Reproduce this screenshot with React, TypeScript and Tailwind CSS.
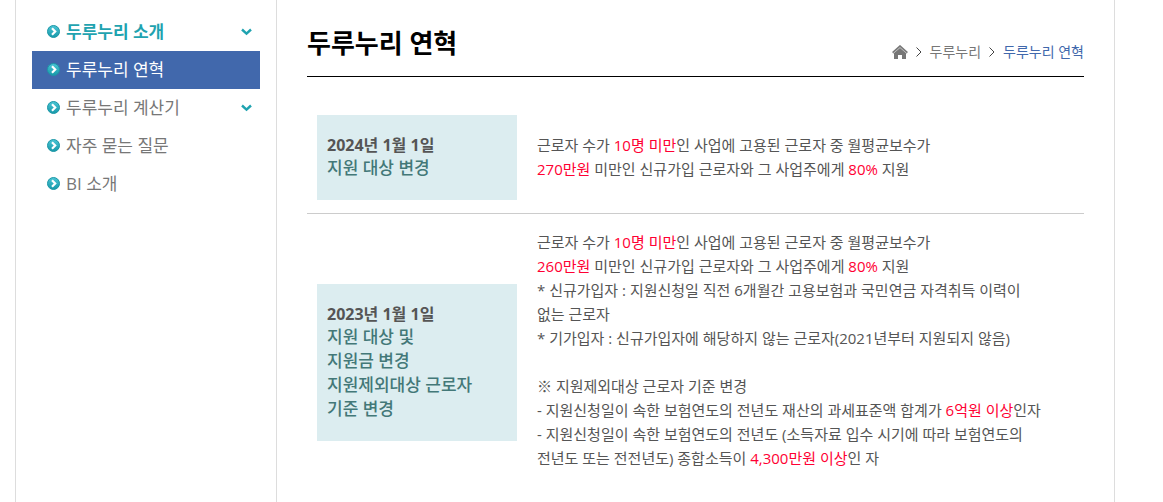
import type { ReactNode } from "react";

const menuItems = [
  { label: "두루누리 소개", state: "open", hasChildren: true },
  { label: "두루누리 연혁", state: "current", hasChildren: false },
  { label: "두루누리 계산기", state: "idle", hasChildren: true },
  { label: "자주 묻는 질문", state: "idle", hasChildren: false },
  { label: "BI 소개", state: "idle", hasChildren: false },
];

const menuStyles: Record<string, string> = {
  open: "font-bold text-[#1fa3b0]",
  current: "bg-[#4168ac] text-white",
  idle: "text-[#777777]",
};

const BulletIcon = () => (
  <svg width="14" height="14" viewBox="0 0 14 14" aria-hidden="true">
    <defs>
      <linearGradient id="bullet" x1="0" y1="0" x2="0" y2="1">
        <stop offset="0" stopColor="#4cc6d6" />
        <stop offset="1" stopColor="#1698a9" />
      </linearGradient>
    </defs>
    <circle cx="6.5" cy="6.5" r="6" fill="url(#bullet)" stroke="#1c97a6" />
    <path d="M5 3.3L8.2 6.5 5 9.7" fill="none" stroke="#fff" strokeWidth="2.2" />
  </svg>
);

const ChevronDown = () => (
  <svg width="11" height="8" viewBox="0 0 11 8" aria-hidden="true">
    <path d="M1 1.5l4.5 4.2L10 1.5" fill="none" stroke="#1fa3b0" strokeWidth="2.4" />
  </svg>
);

const HomeIcon = () => (
  <svg width="16" height="14" viewBox="0 0 16 14" aria-hidden="true">
    <path d="M2 8l6-6 6 6v6h-4v-4H6v4H2z" fill="#777" />
    <path d="M.8 8.8L8 2.6l7.2 6.2" fill="none" stroke="#c4c4c4" />
    <path d="M.6 7.6L8 1l7.4 6.6" fill="none" stroke="#777" strokeWidth="1.6" />
  </svg>
);

const Separator = () => (
  <svg width="6" height="10" viewBox="0 0 6 10" aria-hidden="true">
    <path d="M.5.5L5 5 .5 9.5" fill="none" stroke="#444" />
  </svg>
);

const Point = ({ children }: { children: ReactNode }) => (
  <span className="text-[#ff0033]">{children}</span>
);

const Period = ({ date, children }: { date: string; children: ReactNode }) => (
  <div className="w-[200px] bg-[#dcedf0] px-[10px] py-5 text-left">
    <p className="text-base leading-[21px] font-bold text-[#555555]">{date}</p>
    <p className="text-[17px] leading-6 font-medium text-[#437878]">{children}</p>
  </div>
);

const Sidebar = () => (
  <nav className="w-[261px] shrink-0 border-r border-[#dddddd] px-4 pt-[13px]">
    <ul>
      {menuItems.map((item) => (
        <li key={item.label}>
          <a
            href="#"
            className={`flex h-[38px] items-center gap-[5px] pr-2 pl-[15px] text-[17px] ${menuStyles[item.state]}`}
          >
            <BulletIcon />
            <span className="grow">{item.label}</span>
            {item.hasChildren && <ChevronDown />}
          </a>
        </li>
      ))}
    </ul>
  </nav>
);

export default function App() {
  return (
    <div className="mr-12 ml-[15px] flex min-h-screen border-x border-[#dddddd] bg-white font-['Open_Sans','Noto_Sans_CJK_KR',sans-serif]">
      <Sidebar />
      <main className="min-w-0 grow px-[30px]">
        <header className="flex h-[77px] items-center justify-between border-b border-black pt-[10px]">
          <h1 className="text-[26px] leading-9 font-bold text-black">두루누리 연혁</h1>
          <nav className="flex items-center gap-2 pt-[18px] text-sm text-[#777777]">
            <a href="#" aria-label="홈">
              <HomeIcon />
            </a>
            <Separator />
            <a href="#">두루누리</a>
            <Separator />
            <a href="#" aria-current="page" className="text-[#4168ac]">
              두루누리 연혁
            </a>
          </nav>
        </header>

        <table className="mt-6 w-full border-separate border-spacing-0 text-[15px] leading-6 text-[#555555]">
          <tbody>
            <tr>
              <th scope="row" className="w-[230px] border-b border-[#cccccc] px-[10px] pt-[14px] pb-[13px]">
                <Period date="2024년 1월 1일">지원 대상 변경</Period>
              </th>
              <td className="border-b border-[#cccccc]">
                근로자 수가 <Point>10명 미만</Point>인 사업에 고용된 근로자 중 월평균보수가
                <br />
                <Point>270만원</Point> 미만인 신규가입 근로자와 그 사업주에게 <Point>80%</Point> 지원
              </td>
            </tr>
            <tr>
              <th scope="row" className="px-[10px] pt-6">
                <Period date="2023년 1월 1일">
                  지원 대상 및
                  <br />
                  지원금 변경
                  <br />
                  지원제외대상 근로자
                  <br />
                  기준 변경
                </Period>
              </th>
              <td className="py-4">
                근로자 수가 <Point>10명 미만</Point>인 사업에 고용된 근로자 중 월평균보수가
                <br />
                <Point>260만원</Point> 미만인 신규가입 근로자와 그 사업주에게 <Point>80%</Point> 지원
                <br />
                * 신규가입자 : 지원신청일 직전 6개월간 고용보험과 국민연금 자격취득 이력이
                <br />
                없는 근로자
                <br />
                * 기가입자 : 신규가입자에 해당하지 않는 근로자(2021년부터 지원되지 않음)
                <br />
                <br />
                ※ 지원제외대상 근로자 기준 변경
                <br />
                - 지원신청일이 속한 보험연도의 전년도 재산의 과세표준액 합계가 <Point>6억원 이상</Point>인자
                <br />
                - 지원신청일이 속한 보험연도의 전년도 (소득자료 입수 시기에 따라 보험연도의
                <br />
                전년도 또는 전전년도) 종합소득이 <Point>4,300만원 이상</Point>인 자
              </td>
            </tr>
          </tbody>
        </table>
      </main>
    </div>
  );
}
